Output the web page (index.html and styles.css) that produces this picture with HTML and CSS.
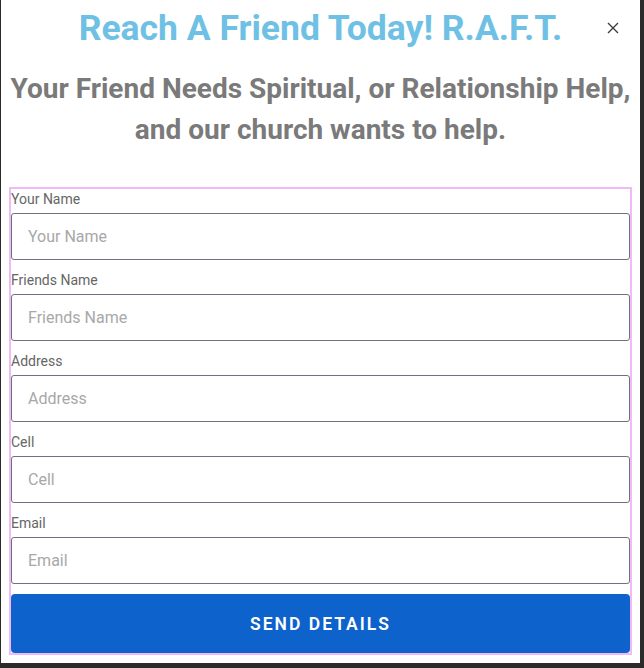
FILE: index.html
```html
<!DOCTYPE html>
<html lang="en">
<head>
<meta charset="utf-8">
<title>Reach A Friend Today</title>
<link rel="stylesheet" href="styles.css">
</head>
<body>
<div class="modal">
  <button class="close" type="button" aria-label="Close">
    <svg width="12" height="12" viewBox="0 0 12 12"><path d="M1 1 L11 11 M11 1 L1 11" stroke="#3d3d3d" stroke-width="1.4" fill="none"/></svg>
  </button>
  <h1 class="title">Reach A Friend Today! R.A.F.T.</h1>
  <h2 class="subtitle">Your Friend Needs Spiritual, or Relationship Help, and our church wants to help.</h2>
  <form class="form">
    <div class="field">
      <label class="label" for="f1">Your Name</label>
      <input class="input" id="f1" type="text" placeholder="Your Name">
    </div>
    <div class="field">
      <label class="label" for="f2">Friends Name</label>
      <input class="input" id="f2" type="text" placeholder="Friends Name">
    </div>
    <div class="field">
      <label class="label" for="f3">Address</label>
      <input class="input" id="f3" type="text" placeholder="Address">
    </div>
    <div class="field">
      <label class="label" for="f4">Cell</label>
      <input class="input" id="f4" type="text" placeholder="Cell">
    </div>
    <div class="field">
      <label class="label" for="f5">Email</label>
      <input class="input" id="f5" type="email" placeholder="Email">
    </div>
    <button class="submit" type="button">SEND DETAILS</button>
  </form>
</div>
</body>
</html>
```

FILE: styles.css
```css
html, body {
  margin: 0;
  padding: 0;
  background: #2b2b2b;
  height: 100%;
  overflow: hidden;
}
body {
  padding-left: 1px;
  font-family: Roboto, "Liberation Sans", sans-serif;
}
.modal {
  position: relative;
  width: 639px;
  height: 663px;
  background: #ffffff;
  box-sizing: border-box;
  padding: 0 8px 0 8px;
}
.close {
  position: absolute;
  top: 22px;
  right: 21px;
  border: 0;
  background: none;
  padding: 0;
  width: 12px;
  height: 12px;
  display: block;
  cursor: pointer;
}
.close svg {
  display: block;
}
.title {
  margin: 0;
  padding-top: 7px;
  font-size: 35.5px;
  line-height: 42px;
  font-weight: 700;
  color: #6ec1e4;
  text-align: center;
}
.subtitle {
  margin: 19px 0 0 0;
  font-size: 28px;
  line-height: 41px;
  font-weight: 700;
  color: #7a7a7a;
  text-align: center;
}
.form {
  margin-top: 37px;
  border: 2px solid #f1baf6;
  display: flex;
  flex-direction: column;
}
.field {
  display: flex;
  flex-direction: column;
  margin-bottom: 10px;
}
.label {
  font-size: 14px;
  line-height: 20px;
  color: #666666;
  margin-bottom: 4px;
}
.input {
  height: 47px;
  box-sizing: border-box;
  border: 1px solid #69727d;
  border-radius: 3px;
  padding: 0 16px;
  font-family: Roboto, "Liberation Sans", sans-serif;
  font-size: 16px;
  color: #333;
  background: #fff;
  outline: none;
}
.input::placeholder {
  color: #a8a8a8;
}
.submit {
  height: 59px;
  border: 0;
  border-radius: 4px;
  background: #0e62cc;
  color: #ffffff;
  font-family: Roboto, "Liberation Sans", sans-serif;
  font-size: 17.5px;
  font-weight: 600;
  letter-spacing: 2px;
  cursor: pointer;
}
```
